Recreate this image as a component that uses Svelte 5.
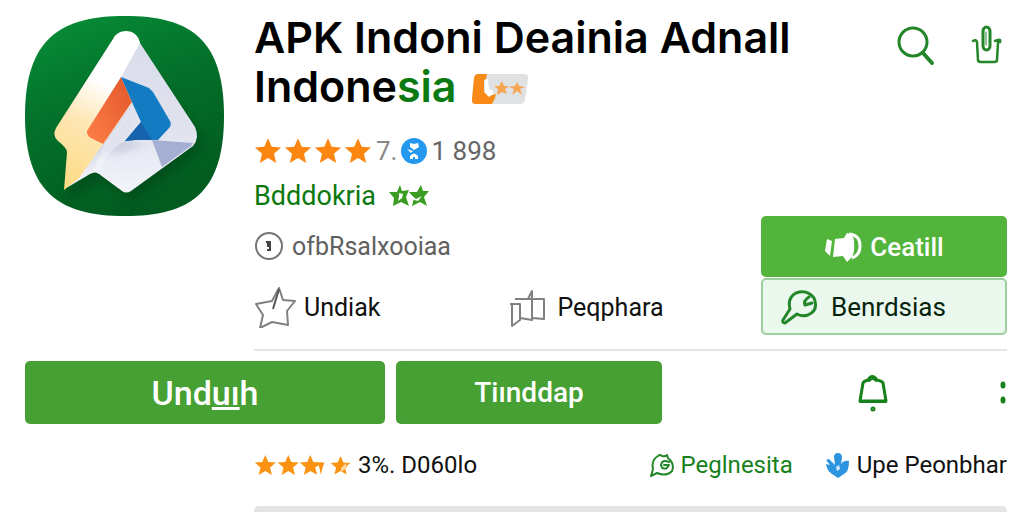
<script>
const star = 'M12 1l3.2 7.4 8 .7-6.100 5.300 1.900 7.900L12 18.100l-7 4.200 1.900-7.900L.8 9.100l8-.7z'
const rating = [1, 2, 3, 4]
</script>

<main>
	<header>
		<svg class="logo" viewBox="0 0 200 200" role="img" aria-label="APK Indoni">
			<defs>
				<linearGradient id="bg" x1="0" y1="0" x2=".4" y2="1">
					<stop offset="0" stop-color="#089038" />
					<stop offset=".5" stop-color="#03702a" />
					<stop offset="1" stop-color="#025c20" />
				</linearGradient>
				<linearGradient id="gold" x1=".6" y1="0" x2=".3" y2="1">
					<stop offset=".3" stop-color="#fff" />
					<stop offset=".6" stop-color="#fee6b4" />
					<stop offset="1" stop-color="#fddc86" />
				</linearGradient>
				<linearGradient id="red" x1="1" y1="0" x2="0" y2="1">
					<stop offset="0" stop-color="#e2562b" />
					<stop offset="1" stop-color="#ff8048" />
				</linearGradient>
				<linearGradient id="grey" x1=".4" y1="0" x2=".4" y2="1">
					<stop offset="0" stop-color="#d9dcea" />
					<stop offset=".6" stop-color="#e0e2ee" />
					<stop offset="1" stop-color="#f3f4fb" />
				</linearGradient>
				<filter id="soft"><feGaussianBlur stdDeviation="4" /></filter>
				<filter id="shade"><feGaussianBlur stdDeviation="3" /></filter>
			</defs>
			<path fill="url(#bg)" d="M100 0C164 0 199 22 199 100s-35 100-99 100S0 178 0 100 36 0 100 0z" />
			<path fill="#003c12" opacity=".45" filter="url(#soft)" d="M104 26l71 93q4 13-5 20l-62 46-30-20-35 18 3-42z" />
			<path fill="url(#grey)" d="M112 20l3 7 55 84q5 11-2 19l-62 45q-5 3-9 0l-23-17q-4-3-9 0l-22 13 20-60z" />
			<path fill="#9fa3bd" opacity=".3" filter="url(#shade)" d="M108 88l8 18-14 19 20 3-22 8-26 4-14 16 18-30z" />
			<path fill="#f5f6fc" d="M107 90l9 16-16 19q-16 8-24 28l-9 4 13-30z" opacity=".5" />
			<path fill="url(#gold)" d="M88 23q4-8 13-8 11 0 14 12L96 61l12 25-30 42-24 34-15 12 3-38q0-4-9-11-6-5-2-13z" />
			<path fill="url(#red)" d="M96 61l11 25-29 42-10-5q-7-3-6-8z" />
			<path fill="#127bc2" d="M96 61l28 11 4 4 17 29q2 4-1 7l-11 12q-17-1-33 1l16-19-9-20z" />
			<path fill="#1763ad" d="M116 106l11 18q-13-1-27 1z" />
			<path fill="#a5aed3" d="M127 124l41 3-2 3-29 21z" />
		</svg>

		<div class="info">
			<div class="top">
				<h1>
					<span>APK Indoni Deainia Adnall</span>
					<span class="last"><span>Indone</span><span class="tint">sia</span>
						<svg class="badge" viewBox="0 0 58 32" width="58" height="32" aria-hidden="true">
							<path fill="#dfe1e3" d="M7 1h46q5 0 4 5l-3 21q-1 4-5 4H5q-5 0-4-5L3 5q1-4 4-4z" />
							<path fill="#f98a17" d="M7 1h9l-1 5-2 1v12l4 4 8-2-1 4-3 6H5q-5 0-4-5L3 5q1-4 4-4z" />
							<path fill="#fff" d="M14 7l3-1 1 10 4 2v3l-4 3-4-5z" />
							<path fill="#f7a54f" d="M31 8l2 5h5l-4 3 2 5-5-2-5 3 1-6-4-3h5zM46 9l2 4 6 1-5 2 2 6-5-4-5 4 2-6-5-2 6-1z" />
						</svg>
					</span>
				</h1>
				<div class="tools">
					<button aria-label="Search">
						<svg viewBox="0 0 40 42" width="40" height="42">
							<circle cx="17" cy="17" r="14" />
							<path stroke-width="4" d="M27 28l9 10" />
						</svg>
					</button>
					<button aria-label="Share">
						<svg viewBox="0 0 32 42" width="32" height="42">
							<rect x="13" y="2" width="7" height="23" rx="4" />
							<path stroke-width="1" d="M16 7v13" />
							<path d="M3 16q3-2 4 1l1 18q0 2 3 2h13q3 0 3-2l1-17q0-4-3-2M28 15q3-1 2 2" stroke-width="2.500" />
						</svg>
					</button>
				</div>
			</div>

			<div class="body">
				<div class="details">
					<div class="rating">
						{#each rating as n (n)}
							<svg class="star" viewBox="0 0 24 24" width="28" height="28"><path d={star} /></svg>
						{/each}
						<span class="seven">7.</span>
						<svg viewBox="0 0 26 26" width="26" height="26" aria-hidden="true">
							<circle cx="13" cy="13" r="13" fill="#2498ee" />
							<path fill="#fff" d="M9 5l4 1 4-1 1 4-5 3-4-3zM6 11l6 2-2 2zM9 21v-3q4-5 8 0v3h-3v-2h-2v2z" />
						</svg>
						<span class="count">1 898</span>
					</div>
					<a class="dev" href="#dev">Bdddokria
						<svg viewBox="0 0 40 24" width="40" height="24" aria-hidden="true">
							<path fill="#3a9c22" d="M11 1l2 6 7-1-3 7 3 9-8-4-8 4 1-8-5-6h8z" />
							<path fill="#3a9c22" d="M32 1l2 6h6l-5 6 3 9-7-4-8 4 2-8-5-6h8z" />
							<path fill="#fff" d="M10 9l4 1-1 4-4 3 1-4zM21 10l6 5 6-3-4 5-4-1z" />
						</svg>
					</a>
					<div class="meta">
						<svg viewBox="0 0 30 30" width="30" height="30" fill="none" stroke="#757575" stroke-width="2" aria-hidden="true">
							<circle cx="15" cy="15" r="13" />
							<path stroke="#444" d="M12 11h4v8M13 19h4M14 10v6" />
						</svg>
						<span>ofbRsalxooiaa</span>
					</div>
					<div class="links">
						<button>
							<svg viewBox="0 0 42 42" width="42" height="42">
								<path d="M25 2l4 12 12 1-8 10 1 14-16-3-12 6 3-13L2 18l16-3z" />
								<path stroke="#555" d="M25 3l-6 20" />
							</svg>
							Undiak
						</button>
						<button>
							<svg viewBox="0 0 42 42" width="42" height="42">
								<path d="M2 18h10v16l-8 6V18M7 13h29v20l-12-1V5l-4 8M12 32l12 2V10" />
							</svg>
							Peqphara
						</button>
					</div>
				</div>
				<div class="cta">
					<button class="call">
						<svg viewBox="0 0 38 34" width="38" height="34" fill="#fff" aria-hidden="true">
							<path d="M3 9l5 2-2 15-5-5zM11 9l9-1 3-5q8 2 7 10 1 9-2 14l-5 5-4-6-10 1z" />
							<path fill="none" stroke="#fff" stroke-width="3" d="M25 4q11 1 11 12 0 9-8 12" />
						</svg>
						Ceatill
					</button>
					<button class="find">
						<svg viewBox="0 0 38 36" width="38" height="36">
							<path d="M9 20Q6 9 15 4q11-4 18 5 5 12-6 17-6 2-11-1L4 34q-3 0-2-3z" />
							<path d="M28 8q-6 4-4 8l7-2" />
						</svg>
						Benrdsias
					</button>
				</div>
			</div>
		</div>
	</header>

	<section class="actions">
		<button class="big">Und<u>uı</u>h</button>
		<button class="big small">Tiınddap</button>
		<div class="more">
			<button aria-label="Notifications">
				<svg viewBox="0 0 32 42" width="32" height="42">
					<path d="M3 29L6 11q1-2 5-3 4-7 9 0 5 1 6 3l3 18z" />
					<path stroke-width="2" d="M12 9q4-4 7 0M3 30h26" />
					<circle cx="16" cy="37" r="1" />
				</svg>
			</button>
			<button aria-label="More">
				<svg viewBox="0 0 8 26" width="8" height="26">
					<ellipse cx="4" cy="5" rx="1" ry="2" />
					<ellipse cx="4" cy="20" rx="1" ry="2" />
				</svg>
			</button>
		</div>
	</section>

	<footer>
		<div class="score">
			<svg viewBox="0 0 98 24" width="98" height="24" fill="#fb9210" aria-hidden="true">
				<path transform="translate(0 1) scale(.94)" d={star} />
				<path transform="translate(23 1) scale(.94)" d={star} />
				<path transform="translate(45 1) scale(.94)" d="M12 1l3.200 7.400 12 .7-2 5-2 8-2-10-4 2 2 8-7-4-7 4.200 1.900-7.900L.8 9.100l8-.7z" />
				<path transform="translate(76 2) scale(.88)" d={star} />
				<path fill="#ffd49a" d="M87 15l5-5 1 5-6 4z" />
			</svg>
			<span>3%. D060lo</span>
		</div>
		<a class="green" href="#review">
			<svg viewBox="0 0 26 26" width="26" height="26">
				<path d="M4 17Q2 8 9 4q2-2 4 0 3 1 5-1l1 3q7 6 4 13-6 6-15 2l-6 3z" />
				<path d="M20 10q-7-3-8 3 1 5 6 3l2-3h-5" />
			</svg>
			Peglnesita
		</a>
		<a href="#upe">
			<svg viewBox="0 0 26 26" width="26" height="26" aria-hidden="true">
				<path fill="#2d94e0" d="M9 5q0-4 4-4t4 5l-1 6q3-4 8-3 0 11-5 13l-6 4-6-4Q2 19 1 12l4 1-4-5 3-1 6 6z" />
				<path fill="#d4ebfb" d="M11 15l3-2 1 4-3 2z" />
			</svg>
			Upe Peonbhar
		</a>
	</footer>
	<div class="panel"></div>
</main>

<style>
:global(body) {
	margin: 0;
	background: #fefffe;
}
main {
	padding: 13px 17px 0 25px;
	font-family: Roboto, sans-serif;
	font-size: 26px;
	color: #111;
}
header {
	display: grid;
	grid-template-columns: 200px 1fr;
	gap: 29px;
}
.logo {
	width: 200px;
	height: 200px;
	margin-top: 3px;
}
button {
	display: flex;
	align-items: center;
	padding: 0;
	border: 0;
	background: none;
	color: inherit;
	font: inherit;
	cursor: pointer;
}
a {
	color: inherit;
	text-decoration: none;
}
svg {
	flex: none;
}
.info {
	border-bottom: 2px solid #e4e5e5;
}
.top {
	display: flex;
	justify-content: space-between;
}
h1 {
	margin: 0;
	max-width: 580px;
	font: 600 43px/49px Inter, sans-serif;
	color: #000;
}
.last {
	white-space: nowrap;
}
.tint {
	color: #0b7a12;
}
.badge {
	margin-left: 4px;
	vertical-align: -3px;
}
.tools {
	display: flex;
	gap: 34px;
	height: 66px;
	padding-right: 5px;
}
.tools svg, .find svg, .more svg, .green svg {
	fill: none;
	stroke: #23872a;
	stroke-width: 3;
	stroke-linecap: round;
	stroke-linejoin: round;
}
.body {
	display: flex;
	justify-content: space-between;
	align-items: flex-end;
	padding: 20px 0 14px;
}
.details {
	flex: 1;
}
.rating, .dev, .meta, .links {
	display: flex;
	align-items: center;
}
.rating {
	height: 40px;
	gap: 2px;
	color: #666;
}
.star {
	fill: #fd8610;
}
.seven {
	margin: 0 2px;
	color: #888;
}
.count {
	margin-left: 2px;
}
.dev {
	height: 50px;
	gap: 13px;
	font-size: 27px;
	color: #0c780f;
}
.meta {
	height: 50px;
	gap: 8px;
	font-size: 25px;
	color: #606060;
}
.links {
	height: 72px;
	margin-bottom: -8px;
	font-size: 25px;
}
.links button {
	width: 50%;
	gap: 8px;
}
.links svg {
	fill: none;
	stroke: #808080;
	stroke-width: 2;
	stroke-linejoin: round;
}
.cta {
	width: 246px;
	display: grid;
	gap: 1px;
}
.call {
	justify-content: center;
	gap: 8px;
	height: 61px;
	border-radius: 5px;
	background: #52b43b;
	color: #fff;
	font-weight: 500;
}
.find {
	gap: 12px;
	height: 57px;
	padding-left: 18px;
	border: 2px solid #9bcf9c;
	border-radius: 5px;
	background: #ebf8ee;
	color: #06230b;
}
.actions {
	display: grid;
	grid-template-columns: 360fr 266fr 334fr;
	gap: 11px;
	margin-top: 10px;
}
.big {
	justify-content: center;
	height: 63px;
	border-radius: 5px;
	background: #46a033;
	color: #fff;
	font-size: 34px;
	font-weight: 500;
}
.small {
	font-size: 28px;
}
.more {
	display: flex;
	justify-content: space-between;
	padding-left: 55%;
}
.more svg {
	stroke: #16811b;
}
footer {
	display: flex;
	align-items: center;
	height: 82px;
	margin-left: 229px;
	font-size: 24px;
}
.score, footer a {
	display: flex;
	align-items: center;
	gap: 6px;
}
.score {
	margin-right: auto;
}
.green {
	margin-right: 32px;
	color: #16811b;
}
.green svg {
	stroke-width: 2;
}
.panel {
	height: 6px;
	margin-left: 229px;
	border-radius: 5px 5px 0 0;
	background: #e3e4e4;
}
</style>
